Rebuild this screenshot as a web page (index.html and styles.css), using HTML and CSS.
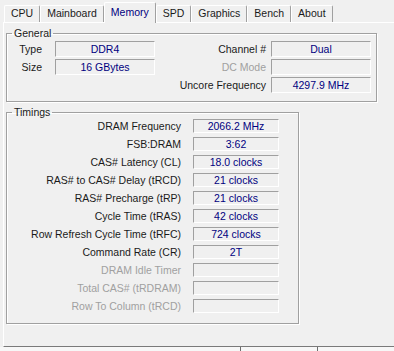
FILE: index.html
```
<!DOCTYPE html>
<html lang="en">
<head>
    <meta charset="UTF-8">
    <meta name="viewport" content="width=device-width, initial-scale=1.0">
    <title>CPU-Z Memory</title>
    <link rel="stylesheet" href="styles.css">
</head>
<body>
    <div class="tabs">
        <div class="tab">CPU</div>
        <div class="tab">Mainboard</div>
        <div class="tab active">Memory</div>
        <div class="tab">SPD</div>
        <div class="tab">Graphics</div>
        <div class="tab">Bench</div>
        <div class="tab">About</div>
    </div>

    <div class="panel">
        <fieldset class="group general">
            <legend>General</legend>
            <div class="general-grid">
                <span class="label first">Type</span>
                <span class="val">DDR4</span>
                <span class="label">Channel #</span>
                <span class="val">Dual</span>

                <span class="label first">Size</span>
                <span class="val">16 GBytes</span>
                <span class="label disabled">DC Mode</span>
                <span class="val"></span>

                <span class="label wide">Uncore Frequency</span>
                <span class="val">4297.9 MHz</span>
            </div>
        </fieldset>

        <fieldset class="group timings">
            <legend>Timings</legend>
            <div class="timings-grid">
                <span class="label">DRAM Frequency</span>
                <span class="val">2066.2 MHz</span>
                <span class="label">FSB:DRAM</span>
                <span class="val">3:62</span>
                <span class="label">CAS# Latency (CL)</span>
                <span class="val">18.0 clocks</span>
                <span class="label">RAS# to CAS# Delay (tRCD)</span>
                <span class="val">21 clocks</span>
                <span class="label">RAS# Precharge (tRP)</span>
                <span class="val">21 clocks</span>
                <span class="label">Cycle Time (tRAS)</span>
                <span class="val">42 clocks</span>
                <span class="label">Row Refresh Cycle Time (tRFC)</span>
                <span class="val">724 clocks</span>
                <span class="label">Command Rate (CR)</span>
                <span class="val">2T</span>
                <span class="label disabled">DRAM Idle Timer</span>
                <span class="val"></span>
                <span class="label disabled">Total CAS# (tRDRAM)</span>
                <span class="val"></span>
                <span class="label disabled">Row To Column (tRCD)</span>
                <span class="val"></span>
            </div>
        </fieldset>
    </div>

    <div class="statusbar">
        <span class="sep"></span>
        <span class="sep"></span>
    </div>
</body>
</html>
```

FILE: styles.css
```
body {
    margin: 0;
    background-color: #f0f0f0;
    font-family: "Liberation Sans", Arial, sans-serif;
    font-size: 10.5px;
    color: #1a1a1a;
    overflow: hidden;
}

/* tab strip */
.tabs {
    display: flex;
    align-items: flex-end;
    height: 22px;
    padding-left: 4px;
}
.tab {
    box-sizing: border-box;
    height: 17px;
    line-height: 15px;
    padding: 0 6px;
    border: 1px solid #fff;
    border-right-color: #a0a0a0;
    border-bottom: none;
    border-radius: 2px 2px 0 0;
}
.tab.active {
    height: 21px;
    line-height: 18px;
    margin-bottom: -1px;
    padding: 0 6px;
    color: #000080;
    background-color: #f0f0f0;
    position: relative;
    z-index: 1;
}

/* page under the tabs */
.panel {
    box-sizing: border-box;
    height: 325px;
    margin-left: 3px;
    padding-left: 2px;
    padding-top: 4px;
    border-top: 1px solid #fff;
    border-left: 1px solid #fff;
    border-bottom: 1px solid #7a7a7a;
}

.group {
    box-sizing: border-box;
    margin: 0;
    padding: 0;
    border: 1px solid #a0a0a0;
    box-shadow: inset 1px 1px 0 #fff, 1px 1px 0 #fff;
}
.group legend {
    margin-left: 5px;
    padding: 0 2px;
    line-height: 13px;
}

.general {
    width: 371px;
}
.general-grid {
    display: grid;
    grid-template-columns: 43px 100px 1fr 100px;
    grid-auto-rows: 16px;
    column-gap: 5px;
    row-gap: 2px;
    padding: 1px 5px 8px 0;
}
.general-grid .first {
    padding-right: 8px;
}
.general-grid .wide {
    grid-column: 1 / 4;
}

.timings {
    width: 293px;
    margin-top: 4px;
}
.timings-grid {
    display: grid;
    grid-template-columns: 1fr 86px;
    grid-auto-rows: 14px;
    column-gap: 12px;
    row-gap: 4px;
    padding: 0 19px 10px 0;
}

.label {
    text-align: right;
    white-space: nowrap;
    line-height: 16px;
}
.timings-grid .label {
    line-height: 14px;
}
.label.disabled {
    color: #a0a0a0;
}

.val {
    box-sizing: border-box;
    border-top: 1px solid #a0a0a0;
    border-left: 1px solid #a0a0a0;
    border-right: 1px solid #fff;
    border-bottom: 1px solid #fff;
    color: #000080;
    text-align: center;
    line-height: 14px;
    white-space: nowrap;
}
.timings-grid .val {
    line-height: 12px;
}

.statusbar {
    display: flex;
    gap: 76px;
    height: 4px;
    padding-left: 240px;
    background-color: #f7f7f7;
}
.statusbar .sep {
    width: 1px;
    background-color: #6d6d6d;
}
```
